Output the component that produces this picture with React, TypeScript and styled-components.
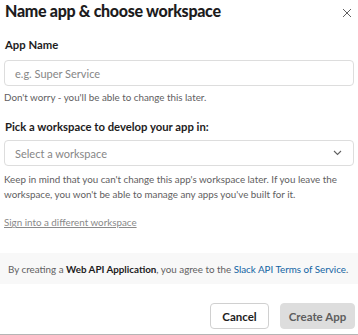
import * as React from 'react';
import styled, { createGlobalStyle } from 'styled-components';

const GlobalStyle = createGlobalStyle`
  html, body {
    margin: 0;
    padding: 0;
    background: #fff;
  }
  body {
    font-family: Lato, "Liberation Sans", sans-serif;
    color: #1d1c1d;
  }
`;

const Dialog = styled.div`
  width: 358px;
  height: 335px;
  box-sizing: border-box;
  border-bottom: 1px solid #b5b5b5;
  display: flex;
  flex-direction: column;
  overflow: hidden;
`;

const Header = styled.div`
  display: flex;
  align-items: center;
  justify-content: space-between;
  padding: 0 5px 0 5px;
  height: 22px;
`;

const Title = styled.h1`
  margin: 0;
  font-size: 16px;
  font-weight: 900;
  letter-spacing: -0.3px;
  line-height: 22px;
`;

const CloseButton = styled.button`
  border: none;
  background: none;
  padding: 0;
  width: 12px;
  height: 12px;
  display: flex;
  align-items: center;
  justify-content: center;
  color: #616061;
  margin-top: 4px;
`;

const Body = styled.div`
  padding: 15px 4px 0 4px;
  display: flex;
  flex-direction: column;
`;

const Label = styled.label<{ top?: number }>`
  font-size: 11.3px;
  font-weight: 700;
  line-height: 16px;
  margin-top: ${(p) => p.top ?? 0}px;
  padding-left: 1px;
`;

const Field = styled.div<{ top?: number }>`
  margin-top: ${(p) => p.top ?? 7}px;
  height: 26px;
  box-sizing: border-box;
  border: 1px solid #dddddd;
  border-radius: 4px;
  display: flex;
  align-items: center;
  justify-content: space-between;
  padding: 0 11px 0 10px;
  font-size: 11px;
  color: #868686;
`;

const Help = styled.p<{ top?: number }>`
  margin: ${(p) => p.top ?? 4}px 0 0 0;
  font-size: 9.8px;
  line-height: 15px;
  color: #616061;
`;

const SignLink = styled.a`
  margin-top: 13px;
  font-size: 9.8px;
  line-height: 15px;
  color: #8a8a8a;
  text-decoration: underline;
  align-self: flex-start;
`;

const Terms = styled.div`
  margin-top: 23px;
  height: 31px;
  background: #f8f8f8;
  display: flex;
  align-items: center;
  padding-left: 8px;
  font-size: 9.8px;
  color: #616061;
  white-space: nowrap;
  b {
    color: #1d1c1d;
    font-weight: 700;
  }
  a {
    color: #1264a3;
    text-decoration: none;
  }
`;

const Footer = styled.div`
  display: flex;
  justify-content: flex-end;
  gap: 11px;
  padding: 19px 3px 0 0;
`;

const Button = styled.button<{ primary?: boolean }>`
  height: 26px;
  box-sizing: border-box;
  border-radius: 4px;
  font-family: Lato, "Liberation Sans", sans-serif;
  font-size: 11.5px;
  font-weight: 700;
  padding: 0;
  border: 1px solid ${(p) => (p.primary ? '#dddddd' : '#d0d0d0')};
  background: ${(p) => (p.primary ? '#dddddd' : '#ffffff')};
  color: ${(p) => (p.primary ? '#5e5e5e' : '#1d1c1d')};
  width: ${(p) => (p.primary ? 75 : 59)}px;
`;

export default function App() {
  return (
    <Dialog>
      <GlobalStyle />
      <Header>
        <Title>Name app &amp; choose workspace</Title>
        <CloseButton aria-label="Close">
          <svg width="10" height="10" viewBox="0 0 10 10">
            <path d="M1 1 L9 9 M9 1 L1 9" stroke="currentColor" strokeWidth="1" fill="none" />
          </svg>
        </CloseButton>
      </Header>
      <Body>
        <Label>App Name</Label>
        <Field>e.g. Super Service</Field>
        <Help>Don't worry - you'll be able to change this later.</Help>
        <Label top={14}>Pick a workspace to develop your app in:</Label>
        <Field top={5}>
          <span>Select a workspace</span>
          <svg width="9" height="6" viewBox="0 0 9 6">
            <path d="M1 1 L4.5 4.5 L8 1" stroke="#616061" strokeWidth="1.1" fill="none" />
          </svg>
        </Field>
        <Help top={6}>
          Keep in mind that you can't change this app's workspace later. If you leave the
          workspace, you won't be able to manage any apps you've built for it.
        </Help>
        <SignLink>Sign into a different workspace</SignLink>
      </Body>
      <Terms>
        <span>
          By creating a <b>Web API Application</b>, you agree to the <a>Slack API Terms of Service</a>.
        </span>
      </Terms>
      <Footer>
        <Button>Cancel</Button>
        <Button primary>Create App</Button>
      </Footer>
    </Dialog>
  );
}
